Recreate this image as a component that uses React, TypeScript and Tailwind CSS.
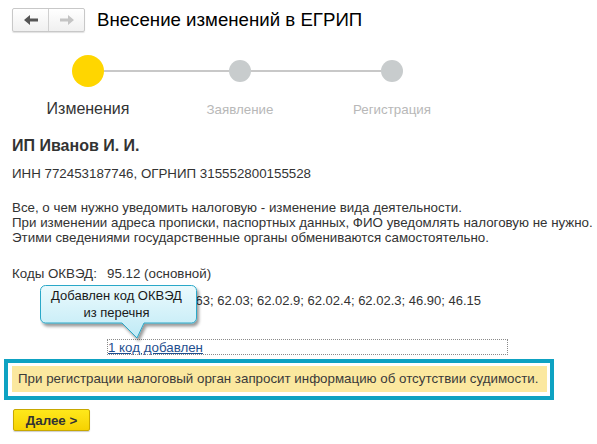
import { useState } from 'react';

const steps = [
  { id: 'changes', label: 'Изменения' },
  { id: 'statement', label: 'Заявление' },
  { id: 'registration', label: 'Регистрация' },
];

const NavArrow = ({ dir, color }: { dir: 'left' | 'right'; color: string }) => (
  <svg width="14" height="10" viewBox="0 0 14 10">
    {dir === 'left' ? (
      <path d="M0 5 L6 0 V3.5 H14 V6.5 H6 V10 Z" fill={color} />
    ) : (
      <path d="M14 5 L8 0 V3.5 H0 V6.5 H8 V10 Z" fill={color} />
    )}
  </svg>
);

const Callout = () => (
  <div className="absolute left-[40px] top-[285px] w-[164px] h-[58px]">
    <svg className="absolute left-0 top-0" width="164" height="58" viewBox="0 0 164 58">
      <defs>
        <linearGradient id="callFill" x1="0" y1="0" x2="0" y2="1">
          <stop offset="0" stopColor="#ebfafd" />
          <stop offset="1" stopColor="#bfeaf6" />
        </linearGradient>
        <filter id="callShadow" x="-10%" y="-10%" width="130%" height="140%">
          <feDropShadow dx="2" dy="3" stdDeviation="1.5" floodColor="#000" floodOpacity="0.4" />
        </filter>
      </defs>
      <path
        d="M5.5 0.5 H151.5 A5 5 0 0 1 156.5 5.5 V33 A5 5 0 0 1 151.5 38 H104 L97 53 L82 38 H5.5 A5 5 0 0 1 0.5 33 V5.5 A5 5 0 0 1 5.5 0.5 Z"
        fill="url(#callFill)"
        stroke="#2ba8c8"
        strokeWidth="1"
        filter="url(#callShadow)"
      />
    </svg>
    <div className="relative w-[153px] pt-[2px] text-center text-[13px] leading-[17px] text-[#1a1a1a]">
      Добавлен код ОКВЭД
      <br />
      из перечня
    </div>
  </div>
);

export default function App() {
  const [current] = useState(0);

  return (
    <div className="relative w-[597px] h-[444px] overflow-hidden bg-white font-['Liberation_Sans',Arial,sans-serif] text-[13.33px] leading-[15px] text-[#333]">
      {/* Header */}
      <div className="flex items-start pt-[8px] pl-[12px]">
        <div className="flex h-[24px] w-[73px] rounded-[2px] border border-[#c8c8c8] bg-gradient-to-b from-white to-[#f0f0f0] shadow-[0_1px_1px_rgba(0,0,0,0.12)]">
          <button className="flex w-[36px] items-center justify-center border-r border-[#d0d0d0]">
            <NavArrow dir="left" color="#555" />
          </button>
          <button className="flex flex-1 items-center justify-center">
            <NavArrow dir="right" color="#c4c4c4" />
          </button>
        </div>
        <h1 className="ml-[12px] text-[18.67px] leading-[24px] text-black">Внесение изменений в ЕГРИП</h1>
      </div>

      {/* Stepper */}
      <div className="mt-[23px] flex h-[32px] items-center pl-[72px]">
        <div className="h-[32px] w-[32px] rounded-full bg-[#ffd600]" />
        <div className="h-[2px] w-[125px] bg-[#c8c8c8]" />
        <div className="h-[22px] w-[22px] rounded-full bg-[#c8cccd]" />
        <div className="h-[2px] w-[130px] bg-[#c8c8c8]" />
        <div className="h-[22px] w-[22px] rounded-full bg-[#c8cccd]" />
      </div>
      <div className="mt-[13px] flex items-baseline pl-[12px]">
        {steps.map((s, i) => (
          <div
            key={s.id}
            className={
              i === current
                ? 'w-[152px] text-center text-[16px] leading-[18px] text-[#333]'
                : 'w-[152px] text-center text-[13.33px] leading-[18px] text-[#b8b8b8]'
            }
          >
            {s.label}
          </div>
        ))}
      </div>

      {/* Entrepreneur */}
      <div className="mt-[18px] pl-[12px] text-[16px] font-bold leading-[18px] text-[#333]">ИП Иванов И. И.</div>
      <div className="mt-[11px] pl-[12px]">ИНН 772453187746, ОГРНИП 315552800155528</div>

      <div className="mt-[19px] pl-[12px]">
        <p>Все, о чем нужно уведомить налоговую - изменение вида деятельности.</p>
        <p>При изменении адреса прописки, паспортных данных, ФИО уведомлять налоговую не нужно.</p>
        <p>Этими сведениями государственные органы обмениваются самостоятельно.</p>
      </div>

      {/* OKVED */}
      <div className="mt-[21px] flex pl-[12px]">
        <span className="w-[95px]">Коды ОКВЭД:</span>
        <span>95.12 (основной)</span>
      </div>
      <div className="mt-[12px] pl-[116px] text-[13px]">
        62.01; 62.02; 63; 62.03; 62.02.9; 62.02.4; 62.02.3; 46.90; 46.15
      </div>

      <div className="ml-[107px] mt-[31px] h-[16px] w-[401px] border border-dotted border-[#8a8a8a]">
        <a href="#" className="leading-[14px] text-[#1f4f8f] underline">
          1 код добавлен
        </a>
      </div>

      {/* Notice */}
      <div className="ml-[4px] mt-[4px] w-[550px] border-4 border-[#0ea2c2] bg-white pb-[4px] pl-[4px] pr-[3px] pt-[3px]">
        <div className="h-[26px] bg-[#fbe89f] pl-[6px] leading-[26px] text-[#3a3a3a]">
          При регистрации налоговый орган запросит информацию об отсутствии судимости.
        </div>
      </div>

      <button className="ml-[13px] mt-[9px] h-[22px] w-[77px] rounded-[2px] border border-[#c8a800] bg-gradient-to-b from-[#ffe81a] to-[#f6d200] text-[13.33px] font-bold text-[#333] shadow-[0_1px_1px_rgba(0,0,0,0.2)]">
        Далее &gt;
      </button>

      <Callout />
    </div>
  );
}
